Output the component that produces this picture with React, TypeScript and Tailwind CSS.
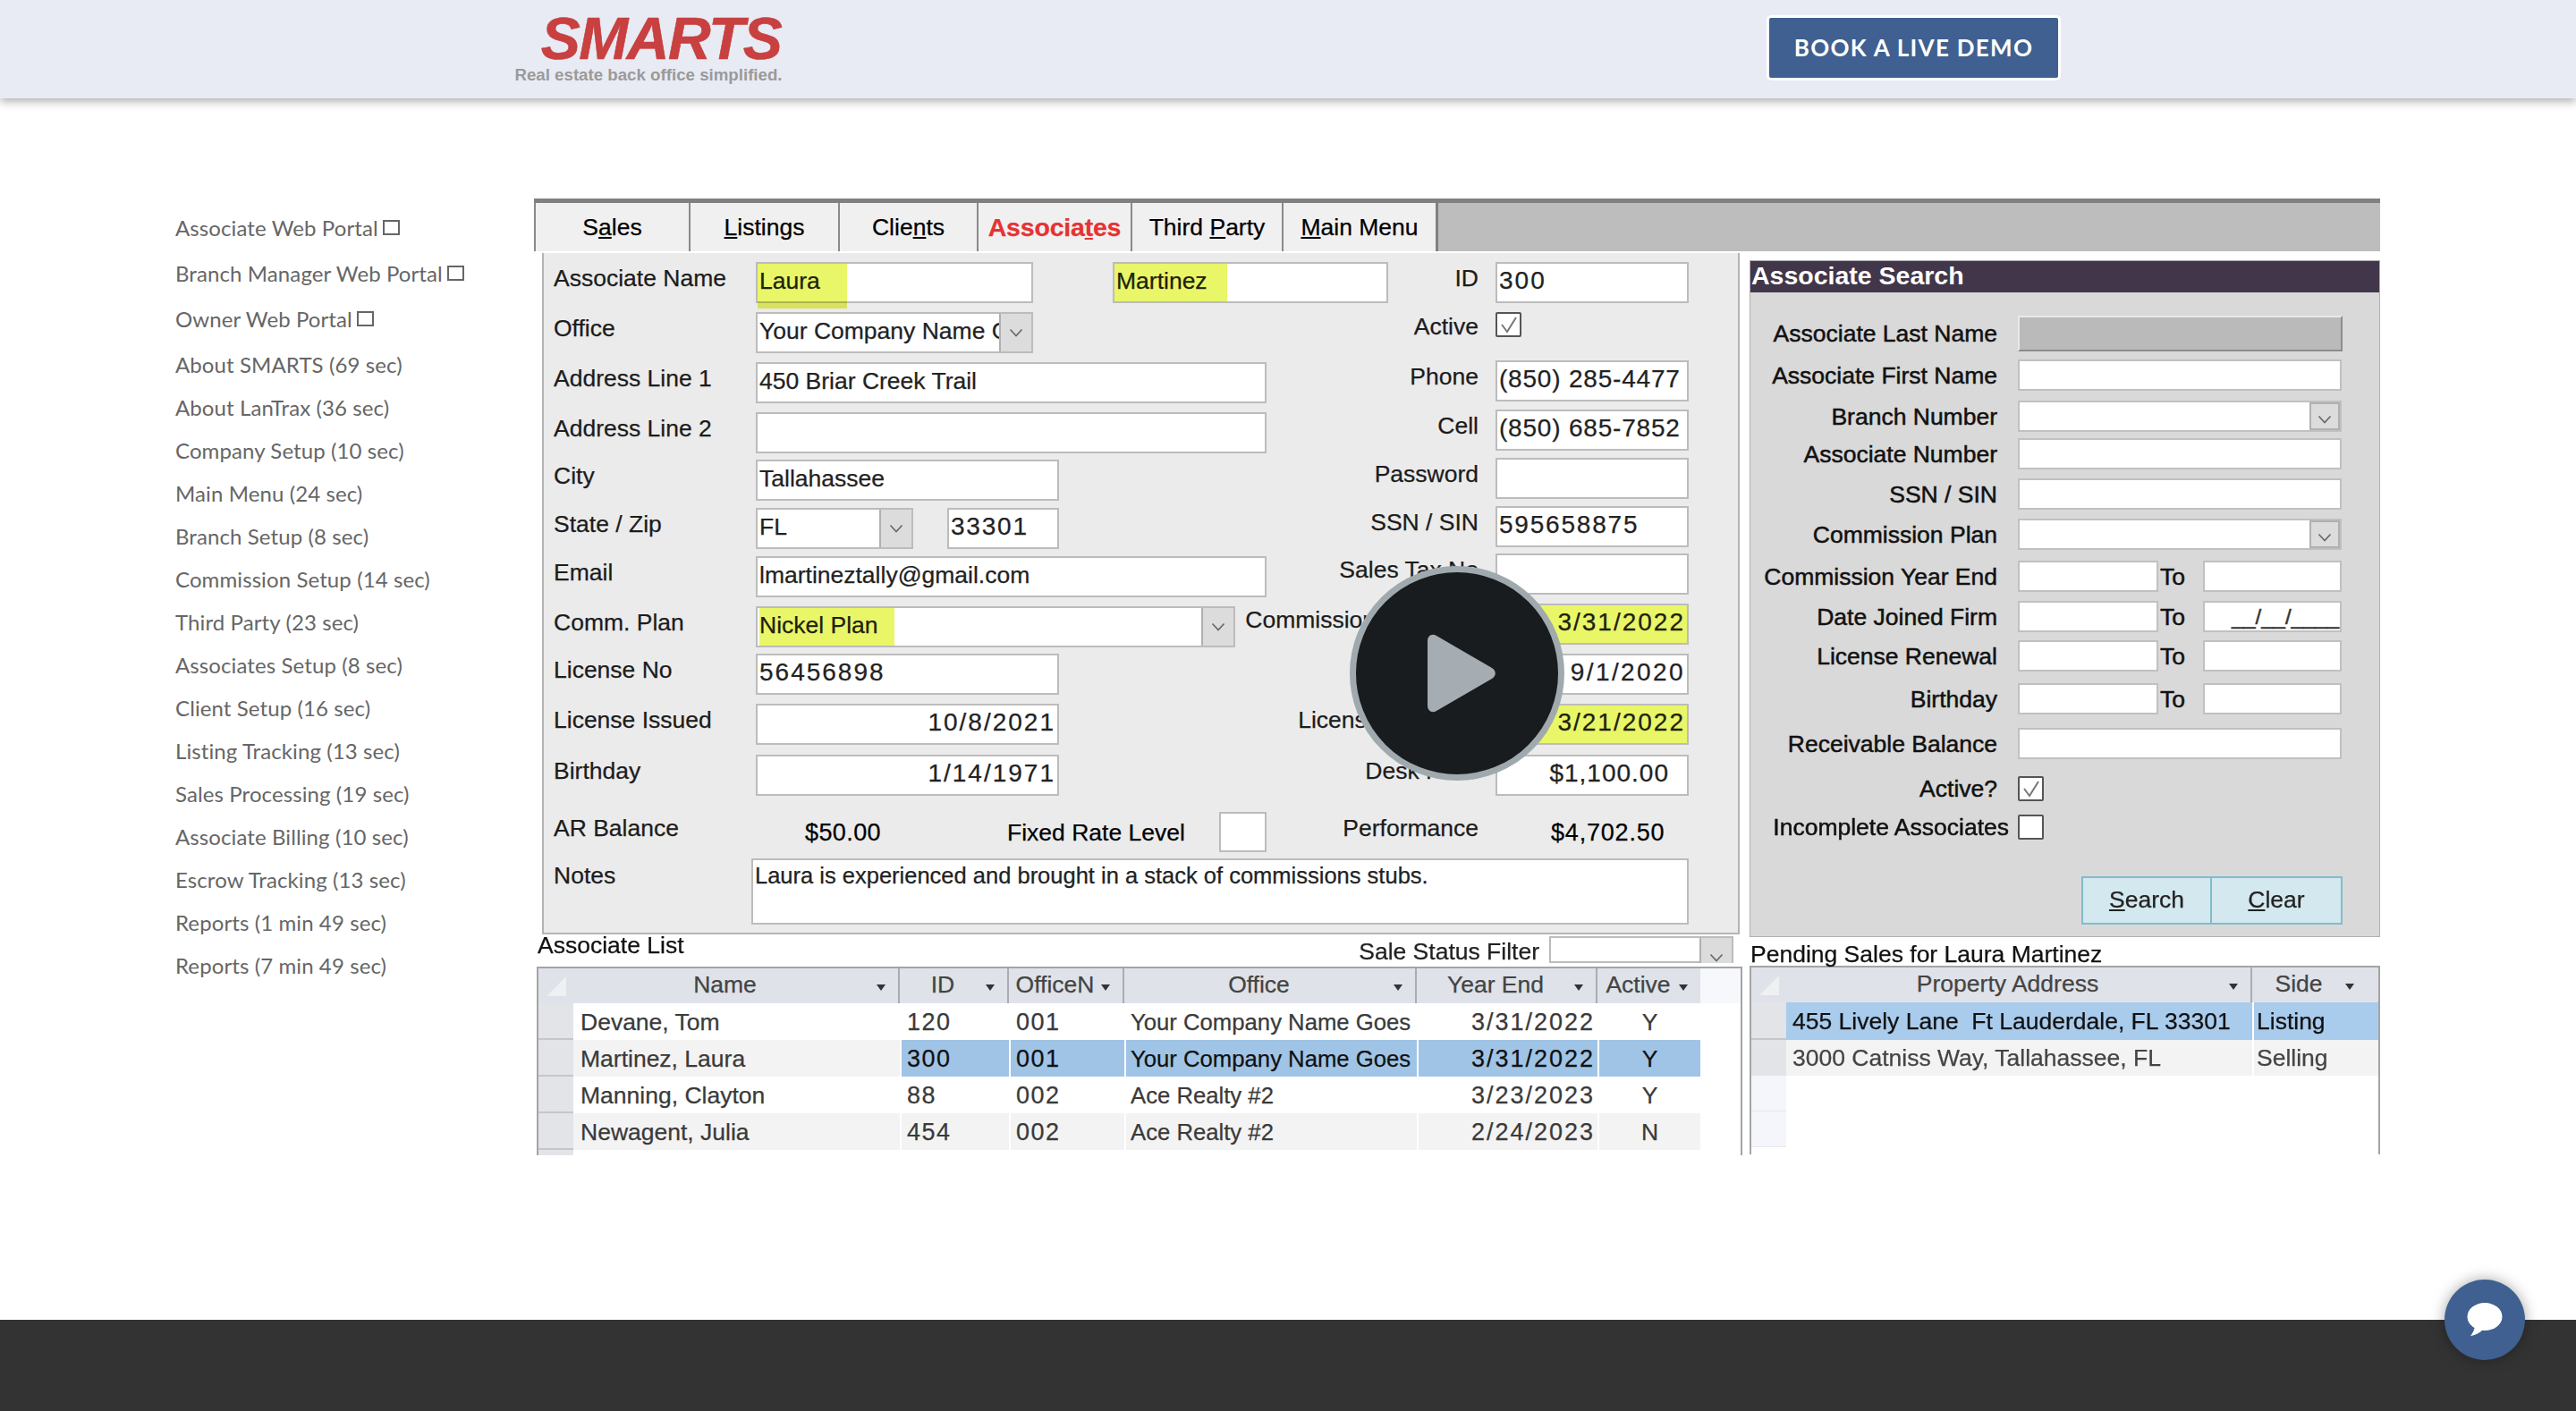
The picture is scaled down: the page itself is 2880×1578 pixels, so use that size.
import type { ReactNode } from 'react';

const sideLinks = [
    'About SMARTS (69 sec)',
    'About LanTrax (36 sec)',
    'Company Setup (10 sec)',
    'Main Menu (24 sec)',
    'Branch Setup (8 sec)',
    'Commission Setup (14 sec)',
    'Third Party (23 sec)',
    'Associates Setup (8 sec)',
    'Client Setup (16 sec)',
    'Listing Tracking (13 sec)',
    'Sales Processing (19 sec)',
    'Associate Billing (10 sec)',
    'Escrow Tracking (13 sec)',
    'Reports (1 min 49 sec)',
    'Reports (7 min 49 sec)',
];

const associates = [
    { name: 'Devane, Tom', id: '120', num: '001', office: 'Your Company Name Goes', end: '3/31/2022', active: 'Y', bg: 'bg-white', cell: 'bg-white' },
    { name: 'Martinez, Laura', id: '300', num: '001', office: 'Your Company Name Goes', end: '3/31/2022', active: 'Y', bg: 'bg-[#f3f3f3]', cell: 'bg-[#a0c4e6] text-[#111]' },
    { name: 'Manning, Clayton', id: '88', num: '002', office: 'Ace Realty #2', end: '3/23/2023', active: 'Y', bg: 'bg-white', cell: 'bg-white' },
    { name: 'Newagent, Julia', id: '454', num: '002', office: 'Ace Realty #2', end: '2/24/2023', active: 'N', bg: 'bg-[#f3f3f3]', cell: 'bg-[#f3f3f3]' },
];

const Chevron = () => (
    <svg width="16" height="10" viewBox="0 0 16 10" fill="none" stroke="#666" strokeWidth="1.6">
        <path d="M1.5 1.5 8 8.5l6.5-7" />
    </svg>
);

const SortArrow = () => (
    <svg width="10" height="7" viewBox="0 0 10 7" className="shrink-0 mr-[14px] mt-[4px]" fill="#333">
        <path d="M0 0h10L5 7z" />
    </svg>
);

const Check = ({ checked }: { checked?: boolean }) => (
    <div className="w-[29px] h-[28px] border-2 border-[#555] bg-white rounded-[2px] flex items-center justify-center">
        {checked && (
            <svg width="20" height="20" viewBox="0 0 20 20" fill="none" stroke="#777" strokeWidth="2">
                <path d="M2 10l6 8L18 2" />
            </svg>
        )}
    </div>
);

const Field = ({
    children,
    className = '',
    mark,
    select,
}: {
    children?: ReactNode;
    className?: string;
    mark?: string;
    select?: boolean;
}) => (
    <div className={`relative bg-white border-2 border-[#bcbcbc] h-[46px] flex items-center shrink-0 ${className}`}>
        <div className="flex-1 min-w-0 overflow-hidden whitespace-nowrap px-[2px] pb-[5px] text-[#222]">{children}</div>
        {select && (
            <div className="w-[36px] self-stretch shrink-0 bg-[#dcdcdc] border-l-2 border-[#b0b0b0] flex items-center justify-center">
                <Chevron />
            </div>
        )}
        {mark && <div className={`absolute bg-[#e9f668] mix-blend-multiply ${mark}`} />}
    </div>
);

const Label = ({ children, className = '' }: { children: ReactNode; className?: string }) => (
    <div className={`whitespace-nowrap pb-[10px] text-[#1c1c1c] ${className}`}>{children}</div>
);

// left side of the associate form
const LeftRow = ({ label, className = '', children }: { label: string; className?: string; children: ReactNode }) => (
    <div className={`flex items-center ${className}`}>
        <Label className="w-[226px] shrink-0">{label}</Label>
        {children}
    </div>
);

const RightRow = ({ label, className = '', children }: { label: string; className?: string; children: ReactNode }) => (
    <div className={`flex items-center ${className}`}>
        <Label className="w-[237px] shrink-0 flex justify-end">{label}</Label>
        <div className="ml-[19px]">{children}</div>
    </div>
);

const SearchRow = ({ label, className = '', children }: { label: string; className?: string; children: ReactNode }) => (
    <div className={`flex items-center h-[35px] ${className}`}>
        <div className="w-[276px] shrink-0 text-right whitespace-nowrap">{label}</div>
        <div className="ml-[23px] w-[362px] h-full flex items-center">{children}</div>
    </div>
);

const SearchInput = ({ select, className = 'w-full' }: { select?: boolean; className?: string }) => (
    <div className={`h-full bg-white border-2 border-[#c0c0c4] flex justify-end ${className}`}>
        {select && (
            <div className="w-[34px] h-full bg-[#dcdcdc] border-2 border-[#b0b0b0] flex items-center justify-center pt-[6px]">
                <Chevron />
            </div>
        )}
    </div>
);

const SearchRange = ({ to }: { to?: ReactNode }) => (
    <>
        <SearchInput className="w-[157px]" />
        <div className="w-[50px] pl-[2px]">To</div>
        <div className="w-[155px] h-full bg-white border-2 border-[#c0c0c4] flex items-center justify-end pr-[1px] text-[24px] text-[#333] whitespace-nowrap">
            {to}
        </div>
    </>
);

const HeadCell = ({ children }: { children: ReactNode }) => (
    <div className="flex items-center border-r-2 border-[#a9adb3] bg-[#dfe2e8] text-[#444]">
        <div className="flex-1 text-center whitespace-nowrap pb-[4px]">{children}</div>
        <SortArrow />
    </div>
);

const Corner = () => (
    <div className="bg-[#dfe2e8] flex items-center justify-center">
        <svg width="26" height="26" viewBox="0 0 26 26" fill="#eef0f3">
            <path d="M24 2v22H2z" />
        </svg>
    </div>
);

const FormPanel = () => (
    <div className="relative ml-[9px] w-[1339px] h-[762px] bg-[#ebebeb] border-l-2 border-r-2 border-b-2 border-[#b4b4b4] pl-[11px] pt-[10px]">
        <div className="flex">
            <div className="w-[797px] shrink-0">
                <LeftRow label="Associate Name">
                    <Field className="w-[310px] text-[26.5px]" mark="left-0 top-0 -bottom-[8px] w-[100px]">Laura</Field>
                    <Field className="ml-[89px] w-[308px] text-[26.5px] text-[#333]" mark="left-0 inset-y-0 w-[126px]">Martinez</Field>
                </LeftRow>
                <LeftRow label="Office" className="mt-[10px]">
                    <Field select className="w-[310px] text-[26.5px]">Your Company Name Goes</Field>
                </LeftRow>
                <LeftRow label="Address Line 1" className="mt-[10px]">
                    <Field className="w-[571px] text-[26.5px]">450 Briar Creek Trail</Field>
                </LeftRow>
                <LeftRow label="Address Line 2" className="mt-[10px]">
                    <Field className="w-[571px]" />
                </LeftRow>
                <LeftRow label="City" className="mt-[7px]">
                    <Field className="w-[339px] text-[26.5px]">Tallahassee</Field>
                </LeftRow>
                <LeftRow label="State / Zip" className="mt-[8px]">
                    <Field select className="w-[176px] text-[26.5px]">FL</Field>
                    <Field className="ml-[38px] w-[125px] text-[28px] tracking-[1.8px]">33301</Field>
                </LeftRow>
                <LeftRow label="Email" className="mt-[8px]">
                    <Field className="w-[571px] text-[26.5px]">lmartineztally@gmail.com</Field>
                </LeftRow>
                <LeftRow label="Comm. Plan" className="mt-[10px]">
                    <Field select className="w-[536px] text-[26.5px]" mark="left-[2px] inset-y-0 w-[151px]">Nickel Plan</Field>
                </LeftRow>
                <LeftRow label="License No" className="mt-[7px]">
                    <Field className="w-[339px] text-[28px] tracking-[2px]">56456898</Field>
                </LeftRow>
                <LeftRow label="License Issued" className="mt-[10px]">
                    <Field className="w-[339px] text-[28px] tracking-[2px] text-right">10/8/2021</Field>
                </LeftRow>
                <LeftRow label="Birthday" className="mt-[11px]">
                    <Field className="w-[339px] text-[28px] tracking-[2px] text-right">1/14/1971</Field>
                </LeftRow>
            </div>
            <div className="w-[472px] shrink-0">
                <RightRow label="ID">
                    <Field className="w-[216px] text-[28px] tracking-[2px]">300</Field>
                </RightRow>
                <RightRow label="Active" className="mt-[10px] h-[44px] items-start">
                    <Check checked />
                </RightRow>
                <RightRow label="Phone" className="mt-[10px]">
                    <Field className="w-[216px] text-[28px] tracking-[0.8px]">(850) 285-4477</Field>
                </RightRow>
                <RightRow label="Cell" className="mt-[9px]">
                    <Field className="w-[216px] text-[28px] tracking-[0.8px]">(850) 685-7852</Field>
                </RightRow>
                <RightRow label="Password" className="mt-[8px]">
                    <Field className="w-[216px]" />
                </RightRow>
                <RightRow label="SSN / SIN" className="mt-[8px]">
                    <Field className="w-[216px] text-[28px] tracking-[1.8px]">595658875</Field>
                </RightRow>
                <RightRow label="Sales Tax No" className="mt-[7px]">
                    <Field className="w-[216px]" />
                </RightRow>
                <RightRow label="Commission Year End" className="mt-[10px]">
                    <Field className="w-[216px] text-[28px] tracking-[2px] text-right" mark="left-0 inset-y-0 w-[212px]">3/31/2022</Field>
                </RightRow>
                <RightRow label="Date Joined" className="mt-[10px]">
                    <Field className="w-[216px] text-[28px] tracking-[2.4px] text-right">9/1/2020</Field>
                </RightRow>
                <RightRow label="License Renewal" className="mt-[10px]">
                    <Field className="w-[216px] text-[28px] tracking-[2px] text-right" mark="inset-0">3/21/2022</Field>
                </RightRow>
                <RightRow label="Desk Fees" className="mt-[11px]">
                    <Field className="w-[216px] text-[28px] tracking-[1px] text-right pr-[18px]">$1,100.00</Field>
                </RightRow>
            </div>
        </div>
        <div className="flex items-center h-[45px] mt-[18px]">
            <Label className="w-[281px] shrink-0 pb-[6px]">AR Balance</Label>
            <div className="w-[226px] shrink-0 text-[27px] tracking-[0.4px]">$50.00</div>
            <div className="w-[237px] shrink-0">Fixed Rate Level</div>
            <div className="w-[53px] h-[45px] shrink-0 bg-white border-2 border-[#bcbcbc]" />
            <Label className="w-[237px] shrink-0 text-right pb-[6px]">Performance</Label>
            <div className="ml-[81px] text-[27px] tracking-[0.8px] whitespace-nowrap">$4,702.50</div>
        </div>
        <div className="flex items-start mt-[7px]">
            <Label className="w-[221px] shrink-0 pt-[3px]">Notes</Label>
            <div className="w-[1048px] h-[74px] bg-white border-2 border-[#bcbcbc] px-[2px] pt-[1px] text-[25.5px] text-[#222]">
                Laura is experienced and brought in a stack of commissions stubs.
            </div>
        </div>
    </div>
);

const AssociateTable = () => (
    <div className="ml-[3px] w-[1348px] h-[211px] overflow-hidden border-t-2 border-x-2 border-[#a4a4a4] bg-white">
        <div className="grid grid-cols-[39px_365px_122px_129px_327px_202px_115px_1fr] h-[39px]">
            <Corner />
            <HeadCell>Name</HeadCell>
            <HeadCell>ID</HeadCell>
            <HeadCell>OfficeN</HeadCell>
            <HeadCell>Office</HeadCell>
            <HeadCell>Year End</HeadCell>
            <div className="flex items-center bg-[#dfe2e8] text-[#444]">
                <div className="flex-1 text-center pb-[4px]">Active</div>
                <SortArrow />
            </div>
            <div className="bg-[#f6f8fc]" />
        </div>
        {associates.map(row => (
            <div key={row.name} className="grid grid-cols-[39px_365px_122px_129px_327px_202px_115px_1fr] h-[41px] text-[#3a3a3a] items-stretch">
                <div className="bg-[#e2e4e8] border-b-2 border-[#c4c6ca]" />
                <div className={`${row.bg} pl-[8px] flex items-center`}>{row.name}</div>
                <div className={`${row.cell} pl-[6px] flex items-center text-[27px] tracking-[1.5px] border-l-2 border-white`}>{row.id}</div>
                <div className={`${row.cell} pl-[6px] flex items-center text-[27px] tracking-[1.5px] border-l-2 border-white`}>{row.num}</div>
                <div className={`${row.cell} pl-[5px] flex items-center whitespace-nowrap text-[25.7px] border-l-2 border-white`}>{row.office}</div>
                <div className={`${row.cell} pr-[3px] flex items-center justify-end text-[27px] tracking-[2px] border-l-2 border-white`}>{row.end}</div>
                <div className={`${row.cell} flex items-center justify-center border-l-2 border-white`}>{row.active}</div>
                <div className="bg-white" />
            </div>
        ))}
        <div className="grid grid-cols-[39px_1fr]">
            <div className="h-[8px] bg-[#e2e4e8]" />
        </div>
    </div>
);

const SearchPanel = () => (
    <div className="h-[757px] mt-[8px] bg-[#d9d9d9] border border-[#b0b0b0] [-webkit-text-stroke:0.5px] text-[#111]">
        <div className="h-[35px] bg-[#41364a] text-white text-[28.5px] font-bold leading-[33px] pl-[1px] [-webkit-text-stroke:0px]">
            Associate Search
        </div>
        <div className="flex items-center h-[40px] mt-[26px]">
            <div className="w-[276px] shrink-0 text-right whitespace-nowrap">Associate Last Name</div>
            <div className="ml-[23px] w-[363px] h-full bg-[#bababa] border-2 border-t-[#e8e8e8] border-l-[#e8e8e8] border-r-[#8c8c8c] border-b-[#8c8c8c]" />
        </div>
        <SearchRow label="Associate First Name" className="mt-[9px]"><SearchInput /></SearchRow>
        <SearchRow label="Branch Number" className="mt-[11px]"><SearchInput select /></SearchRow>
        <SearchRow label="Associate Number" className="mt-[7px]"><SearchInput /></SearchRow>
        <SearchRow label="SSN / SIN" className="mt-[10px]"><SearchInput /></SearchRow>
        <SearchRow label="Commission Plan" className="mt-[10px]"><SearchInput select /></SearchRow>
        <SearchRow label="Commission Year End" className="mt-[12px]"><SearchRange /></SearchRow>
        <SearchRow label="Date Joined Firm" className="mt-[10px]"><SearchRange to="__/__/____" /></SearchRow>
        <SearchRow label="License Renewal" className="mt-[9px]"><SearchRange /></SearchRow>
        <SearchRow label="Birthday" className="mt-[13px]"><SearchRange /></SearchRow>
        <SearchRow label="Receivable Balance" className="mt-[15px]"><SearchInput /></SearchRow>
        <div className="flex items-center h-[28px] mt-[19px]">
            <div className="w-[276px] text-right">Active?</div>
            <div className="ml-[23px]"><Check checked /></div>
        </div>
        <div className="flex items-center h-[28px] mt-[15px]">
            <div className="w-[289px] text-right whitespace-nowrap">Incomplete Associates</div>
            <div className="ml-[10px]"><Check /></div>
        </div>
        <div className="flex justify-end pr-[41px] mt-[41px] [-webkit-text-stroke:0.25px] text-[#222]">
            <div className="w-[146px] h-[54px] bg-[#d3e8ef] border-2 border-[#82bccb] flex items-center justify-center pb-[3px]"><span><u>S</u>earch</span></div>
            <div className="w-[146px] h-[54px] bg-[#d3e8ef] border-2 border-l-0 border-[#82bccb] flex items-center justify-center pb-[3px]"><span><u>C</u>lear</span></div>
        </div>
    </div>
);

const PendingTable = () => (
    <div className="w-[705px] h-[211px] overflow-hidden border-t-2 border-x-2 border-[#a4a4a4] bg-white">
        <div className="grid grid-cols-[39px_521px_141px] h-[39px]">
            <Corner />
            <HeadCell>Property Address</HeadCell>
            <div className="flex items-center bg-[#dfe2e8] text-[#444] pr-[13px]">
                <div className="flex-1 text-center pb-[4px]">Side</div>
                <SortArrow />
            </div>
        </div>
        <div className="grid grid-cols-[39px_521px_141px] h-[42px] text-[#111]">
            <div className="bg-[#e2e4e8] border-b-2 border-[#c4c6ca]" />
            <div className="bg-[#a9cbec] pl-[7px] flex items-center whitespace-nowrap">455 Lively Lane&nbsp; Ft Lauderdale, FL 33301</div>
            <div className="bg-[#a9cbec] ml-[2px] pl-[3px] flex items-center">Listing</div>
        </div>
        <div className="grid grid-cols-[39px_521px_141px] h-[40px] text-[#444]">
            <div className="bg-[#e2e4e8]" />
            <div className="bg-[#f3f3f3] pl-[7px] flex items-center whitespace-nowrap">3000 Catniss Way, Tallahassee, FL</div>
            <div className="bg-[#f3f3f3] ml-[2px] pl-[3px] flex items-center">Selling</div>
        </div>
        <div className="w-[39px] h-[40px] bg-[#f4f6fb] border-b border-[#e6e8ee]" />
        <div className="w-[39px] h-[40px] bg-[#f4f6fb] border-b border-[#e6e8ee]" />
    </div>
);

const ScreenCapture = () => (
    <div className="relative w-[2064px] h-[1070px]">
        <div className="blur-[0.5px] font-['Liberation_Sans',Arial,sans-serif] text-[26.5px] leading-[32px] [-webkit-text-stroke:0.25px]">
            <div className="border-t-[5px] border-[#808080] h-[59px] bg-[#bdbdbd] flex">
                <div className="w-[175px] bg-[#f0f0f0] border-x-2 border-[#8a8a8a] flex items-center justify-center pb-[1px]"><span>S<u>a</u>les</span></div>
                <div className="w-[167px] bg-[#f0f0f0] border-r-2 border-[#8a8a8a] flex items-center justify-center pb-[1px]"><span><u>L</u>istings</span></div>
                <div className="w-[155px] bg-[#f0f0f0] border-r-2 border-[#8a8a8a] flex items-center justify-center pb-[1px]"><span>Clie<u>n</u>ts</span></div>
                <div className="w-[172px] bg-[#f0f0f0] border-r-2 border-[#8a8a8a] flex items-center justify-center pb-[1px] text-[#e53333] font-bold text-[28.5px] tracking-[-0.2px]"><span>Associa<u>t</u>es</span></div>
                <div className="w-[169px] bg-[#f0f0f0] border-r-2 border-[#8a8a8a] flex items-center justify-center pb-[1px]"><span>Third <u>P</u>arty</span></div>
                <div className="w-[173px] bg-[#f0f0f0] border-r-[3px] border-[#808080] flex items-center justify-center pb-[1px]"><span><u>M</u>ain Menu</span></div>
            </div>
            <div className="flex pt-[2px]">
                <div className="w-[1359px] shrink-0">
                    <FormPanel />
                    <div className="relative h-[36px] flex justify-between">
                        <div className="ml-[4px] mt-[-4px] text-[#111]">Associate List</div>
                        <div className="flex items-start pt-[2px] mr-[18px]">
                            <div className="mr-[11px] text-[#222] mt-[1px]">Sale Status Filter</div>
                            <div className="w-[206px] h-[30px] bg-white border-2 border-[#bcbcbc] flex justify-end">
                                <div className="w-[36px] h-[28px] bg-[#dcdcdc] border-l-2 border-[#b0b0b0] flex items-end justify-center pb-[1px]">
                                    <Chevron />
                                </div>
                            </div>
                        </div>
                    </div>
                    <AssociateTable />
                </div>
                <div className="w-[705px] shrink-0">
                    <SearchPanel />
                    <div className="h-[33px] pl-[1px] mt-[-1px] pt-[4px] text-[#111]">Pending Sales for Laura Martinez</div>
                    <PendingTable />
                </div>
            </div>
        </div>

        {/* Play button */}
        <div className="absolute left-[912px] top-[411px] w-[240px] h-[240px] rounded-full bg-[#181c1f] border-[7px] border-[#a0aaae] flex items-center justify-center">
            <svg width="78" height="88" viewBox="0 0 78 88" className="ml-[10px]" fill="#a5adb2">
                <path d="M1 8c0-6 5-9 10-6l62 36c5 3 5 9 0 12L11 86c-5 3-10 0-10-6z" />
            </svg>
        </div>
    </div>
);

export default function App() {
    return (
        <div className="min-h-[1578px] flex flex-col bg-white font-['Lato',sans-serif]">
            <header className="relative z-10 h-[110px] shrink-0 bg-[#e8ebf3] shadow-[0_3px_10px_rgba(0,0,0,0.35)] flex items-center justify-between pl-[575px] pr-[576px]">
                <div className="w-[300px] flex flex-col items-center">
                    <div className="ml-[28px] h-[54px] font-['Liberation_Sans',Arial,sans-serif] font-bold italic text-[66px] leading-[54px] tracking-[-1.5px] text-[#c84040] [-webkit-text-stroke:0.6px]">
                        SMARTS
                    </div>
                    <div className="mt-[4px] font-['Liberation_Sans',Arial,sans-serif] font-bold text-[18.7px] leading-[20px] text-[#9a9a9a] whitespace-nowrap">
                        Real estate back office simplified.
                    </div>
                </div>
                <button className="w-[329px] h-[73px] mt-[-4px] bg-[#3f6090] border-[3px] border-white rounded-[5px] text-white font-bold text-[26px] tracking-[1.3px]">
                    BOOK A LIVE DEMO
                </button>
            </header>

            <main className="flex-1 flex pt-[112px] pl-[196px]">
                <nav className="w-[401px] shrink-0 text-[24px] leading-[32px] tracking-[0.1px] text-[#666] whitespace-nowrap">
                    {['Associate Web Portal', 'Branch Manager Web Portal', 'Owner Web Portal'].map(item => (
                        <div key={item} className="h-[51px] first:mt-[17px] flex items-start">
                            {item}
                            <span className="inline-block w-[19px] h-[17px] ml-[5px] mt-[7px] border-2 border-[#666]" />
                        </div>
                    ))}
                    {sideLinks.map(item => (
                        <div key={item} className="h-[48px]">{item}</div>
                    ))}
                </nav>
                <ScreenCapture />
            </main>

            <footer className="h-[102px] shrink-0 bg-[#333]" />

            {/* Chat launcher */}
            <div className="fixed left-[2733px] top-[1431px] w-[90px] h-[90px] rounded-full bg-[#3f6090] shadow-[0_0_16px_rgba(0,0,0,0.35)] flex items-center justify-center">
                <svg width="40" height="38" viewBox="0 0 40 38" fill="#fff">
                    <ellipse cx="20" cy="15.5" rx="19.5" ry="15.5" />
                    <path d="M9 26c-.5 4-2.5 8-5 11 5-.5 10-3 14-7z" />
                </svg>
            </div>
        </div>
    );
}
